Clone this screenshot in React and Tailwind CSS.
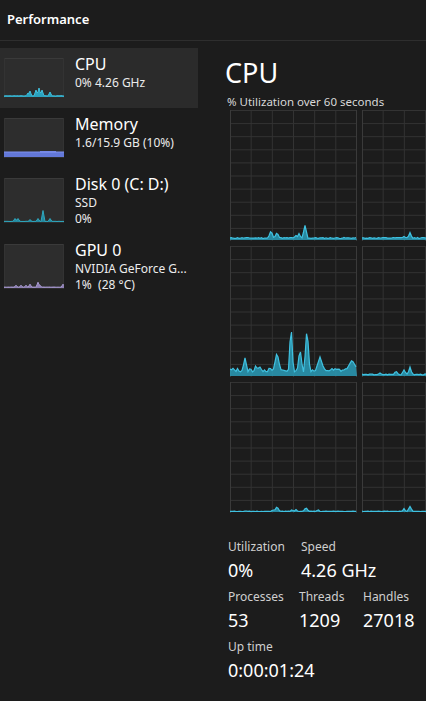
import React from "react";

const FONT = { fontFamily: '"Segoe UI", "Noto Sans", "Open Sans", sans-serif' };

// tiny deterministic noise so the graphs look the same every render
function rand(seed) {
  let s = seed;
  return () => {
    s = (s * 9301 + 49297) % 233280;
    return s / 233280;
  };
}

function makeArea(w, h, spikes, base, jitter, seed, step = 1.5) {
  const r = rand(seed);
  const pts = [];
  for (let x = 0; x <= w + 0.01; x += step) {
    let y = base + r() * jitter;
    spikes.forEach(([sx, sh, hw]) => {
      const d = Math.abs(x - sx);
      if (d < hw) y = Math.max(y, sh * (1 - d / hw) + base);
    });
    pts.push([x, h - y]);
  }
  const line = pts.map(([x, y], i) => `${i ? "L" : "M"}${x.toFixed(1)} ${y.toFixed(1)}`).join(" ");
  return { line, area: `${line} L${w} ${h} L0 ${h} Z` };
}

function BigGraph({ spikes, base = 1.5, jitter = 1, seed = 1, plateau }) {
  const w = 127;
  const h = 131;
  const sp = plateau ? [...spikes, plateau] : spikes;
  const { line, area } = makeArea(w, h - 1, sp, base, jitter, seed);
  return (
    <svg width={w} height={h} className="block shrink-0">
      <rect x="0" y="0" width={w} height={h} fill="#1c1c1c" />
      {[1, 2, 3, 4, 5].map((i) => (
        <line key={"v" + i} x1={(w / 6) * i} y1="0" x2={(w / 6) * i} y2={h} stroke="#333" strokeWidth="1" />
      ))}
      {[0, 1, 2, 3, 4, 5, 6, 7, 8, 9].map((i) => (
        <line key={"h" + i} x1="0" y1={(h / 10) * i + 0.5} x2={w} y2={(h / 10) * i + 0.5} stroke="#333" strokeWidth="1" />
      ))}
      <line x1="0.5" y1="0" x2="0.5" y2={h} stroke="#3a3a3a" />
      <line x1={w - 0.5} y1="0" x2={w - 0.5} y2={h} stroke="#3a3a3a" />
      <path d={area} fill="#2a9cb8" fillOpacity="0.85" />
      <path d={line} fill="none" stroke="#3fc1e0" strokeWidth="1.2" />
    </svg>
  );
}

function Thumb({ h, kind }) {
  const w = 60;
  let content = null;
  if (kind === "cpu") {
    const { line, area } = makeArea(w, h - 1, [[24, 3, 2], [26, 5, 2], [32, 6, 2], [35, 8, 2], [38, 6, 2], [46, 4, 2]], 1, 0.3, 3, 1);
    content = (
      <>
        <path d={area} fill="#2aa3c0" />
        <path d={line} fill="none" stroke="#3fbfdc" strokeWidth="1" />
      </>
    );
  } else if (kind === "mem") {
    content = (
      <>
        <rect x="0" y={h - 6} width={w} height="5" fill="#6378d8" />
        <rect x="36" y={h - 7} width="16" height="2" fill="#6c80e0" />
        <line x1="0" y1={h - 6} x2={w} y2={h - 6} stroke="#7f91ee" />
      </>
    );
  } else if (kind === "disk") {
    const { line, area } = makeArea(w, h - 1, [[11, 3, 2], [14, 3, 2], [26, 2, 1.5], [34, 3, 2], [39, 11, 2], [46, 3, 2]], 0.5, 0.2, 5, 1);
    content = (
      <>
        <path d={area} fill="#24899f" />
        <path d={line} fill="none" stroke="#2fa8bf" strokeWidth="1" />
      </>
    );
  } else {
    const { line, area } = makeArea(w, h - 1, [[12, 2, 1.5], [17, 2, 1.5], [22, 2, 1.5], [26, 3, 2], [34, 5, 2], [36, 2, 2], [59, 3, 2]], 0.8, 0.2, 7, 1);
    content = (
      <>
        <path d={area} fill="#8e80b4" />
        <path d={line} fill="none" stroke="#a89ad0" strokeWidth="1" />
      </>
    );
  }
  return (
    <svg width={w} height={h} className="block shrink-0">
      <rect x="0" y="0" width={w} height={h} fill="#2d2d2d" />
      <line x1="0" y1="0.5" x2={w} y2="0.5" stroke="#3a3a3a" />
      <line x1="0.5" y1="0" x2="0.5" y2={h} stroke="#333" />
      <line x1={w - 0.5} y1="0" x2={w - 0.5} y2={h} stroke="#333" />
      {content}
    </svg>
  );
}

const items = [
  { title: "CPU", lines: ["0% 4.26 GHz"], kind: "cpu", th: 40, height: "h-[60px]", active: true },
  { title: "Memory", lines: ["1.6/15.9 GB (10%)"], kind: "mem", th: 40, height: "h-[60px]" },
  { title: "Disk 0 (C: D:)", lines: ["SSD", "0%"], kind: "disk", th: 45, height: "h-[66px]" },
  { title: "GPU 0", lines: ["NVIDIA GeForce G...", "1%  (28 °C)"], kind: "gpu", th: 45, height: "h-[66px]" },
];

function SideItem({ item }) {
  return (
    <div className={`flex items-start gap-[11px] pl-[4px] pt-[10px] ${item.height} ${item.active ? "bg-[#2b2b2b]" : ""}`}>
      <Thumb h={item.th} kind={item.kind} />
      <div className="flex flex-col -mt-[4px]">
        <span className="text-[16px] leading-[21px] text-white">{item.title}</span>
        {item.lines.map((l) => (
          <span key={l} className="text-[12px] leading-[16px] text-[#ececec] whitespace-pre">{l}</span>
        ))}
      </div>
    </div>
  );
}

function Stat({ label, value, className = "" }) {
  return (
    <div className={`flex flex-col ${className}`}>
      <span className="text-[12px] leading-[16px] text-[#cfcfcf]">{label}</span>
      <span className="text-[18px] leading-[30px] text-white">{value}</span>
    </div>
  );
}

export default function App() {
  const graphs = [
    { spikes: [[41, 8, 3], [47, 6, 3], [66, 3, 3], [69, 5, 2.5], [75, 13, 3]], seed: 11 },
    { spikes: [[48, 6, 2.5], [42, 2, 3]], seed: 12 },
    { spikes: [[15, 14, 3], [26, 8, 2], [30, 5, 3], [47, 20, 4], [61, 50, 2.5], [70, 24, 3], [77, 46, 3], [90, 15, 5]], base: 4, jitter: 4, seed: 13, plateau: [122, 12, 7] },
    { spikes: [[18, 2, 3], [34, 4, 3], [42, 5, 3], [48, 8, 2.5]], base: 1, jitter: 1, seed: 14 },
    { spikes: [[43, 2, 2], [47, 5, 3], [62, 2, 2], [66, 2, 2], [76, 4, 3], [88, 2, 2]], base: 0.5, jitter: 0.3, seed: 15 },
    { spikes: [[42, 3, 2], [48, 5, 3]], base: 0.5, jitter: 0.3, seed: 16 },
  ];

  return (
    <div className="w-[426px] h-[701px] bg-[#1c1c1c] text-white overflow-hidden" style={FONT}>
      <div className="h-[41px] border-b border-[#2e2e2e] pl-[7px] pt-[6px]">
        <span className="text-[13px] leading-[20px] font-semibold">Performance</span>
      </div>

      <div className="flex">
        <div className="w-[198px] pt-[7px] shrink-0">
          {items.map((it) => (
            <SideItem key={it.title} item={it} />
          ))}
        </div>

        <div className="pl-[29px] pt-[14px] overflow-hidden flex-1">
          <div className="text-[27px] leading-[36px] -ml-[2px]">CPU</div>
          <div className="text-[11.5px] leading-[16px] text-[#d8d8d8] mt-[3px]">% Utilization over 60 seconds</div>
          <div className="grid grid-cols-[127px_127px] gap-[5px] pl-[3px] w-[300px]">
            {graphs.map((g, i) => (
              <BigGraph key={i} {...g} />
            ))}
          </div>

          <div className="mt-[26px] flex flex-col gap-[4px] pl-[1px]">
            <div className="flex">
              <Stat label="Utilization" value="0%" className="w-[73px]" />
              <Stat label="Speed" value="4.26 GHz" />
            </div>
            <div className="flex">
              <Stat label="Processes" value="53" className="w-[71px]" />
              <Stat label="Threads" value="1209" className="w-[64px]" />
              <Stat label="Handles" value="27018" />
            </div>
            <Stat label="Up time" value="0:00:01:24" />
          </div>
        </div>
      </div>
    </div>
  );
}
